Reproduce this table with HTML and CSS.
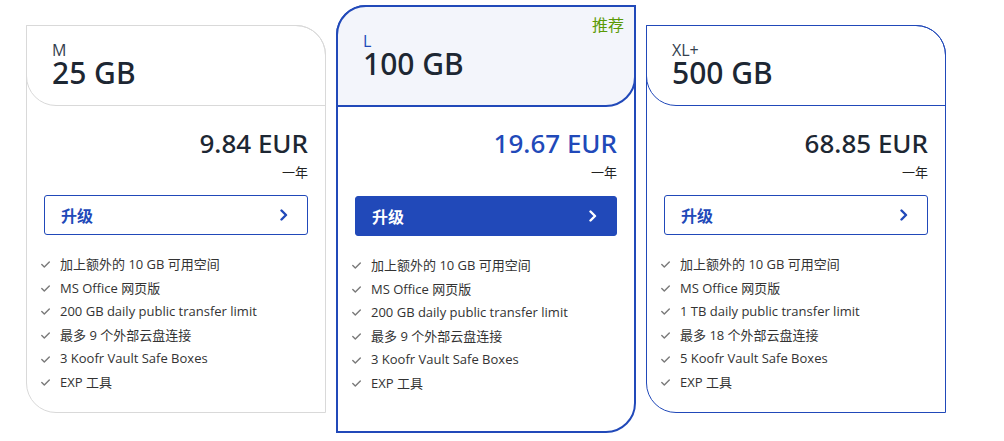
FILE: index.html
```html
<!DOCTYPE html>
<html lang="zh">
<head>
<meta charset="utf-8">
<title>Plans</title>
<link rel="stylesheet" href="styles.css">
</head>
<body>
<div class="plans">
  <div class="card">
    <div class="head">
      <div class="tier">M</div>
      <div class="size">25 GB</div>
    </div>
    <div class="body">
      <div class="price">9.84 EUR</div>
      <div class="period">一年</div>
      <button class="btn"><span>升级</span><svg class="chev" width="10" height="12" viewBox="0 0 10 12"><polyline points="2.5,1.5 7,6 2.5,10.5"/></svg></button>
      <ul class="features">
        <li><svg class="check" width="9" height="7" viewBox="0 0 9 7"><polyline points="0.8,3.6 3.3,6 8.3,1"/></svg><span>加上额外的 10 GB 可用空间</span></li>
        <li><svg class="check" width="9" height="7" viewBox="0 0 9 7"><polyline points="0.8,3.6 3.3,6 8.3,1"/></svg><span>MS Office 网页版</span></li>
        <li><svg class="check" width="9" height="7" viewBox="0 0 9 7"><polyline points="0.8,3.6 3.3,6 8.3,1"/></svg><span>200 GB daily public transfer limit</span></li>
        <li><svg class="check" width="9" height="7" viewBox="0 0 9 7"><polyline points="0.8,3.6 3.3,6 8.3,1"/></svg><span>最多 9 个外部云盘连接</span></li>
        <li><svg class="check" width="9" height="7" viewBox="0 0 9 7"><polyline points="0.8,3.6 3.3,6 8.3,1"/></svg><span>3 Koofr Vault Safe Boxes</span></li>
        <li><svg class="check" width="9" height="7" viewBox="0 0 9 7"><polyline points="0.8,3.6 3.3,6 8.3,1"/></svg><span>EXP 工具</span></li>
      </ul>
    </div>
  </div>

  <div class="card featured">
    <div class="head">
      <span class="badge">推荐</span>
      <div class="tier">L</div>
      <div class="size">100 GB</div>
    </div>
    <div class="body">
      <div class="price">19.67 EUR</div>
      <div class="period">一年</div>
      <button class="btn"><span>升级</span><svg class="chev" width="10" height="12" viewBox="0 0 10 12"><polyline points="2.5,1.5 7,6 2.5,10.5"/></svg></button>
      <ul class="features">
        <li><svg class="check" width="9" height="7" viewBox="0 0 9 7"><polyline points="0.8,3.6 3.3,6 8.3,1"/></svg><span>加上额外的 10 GB 可用空间</span></li>
        <li><svg class="check" width="9" height="7" viewBox="0 0 9 7"><polyline points="0.8,3.6 3.3,6 8.3,1"/></svg><span>MS Office 网页版</span></li>
        <li><svg class="check" width="9" height="7" viewBox="0 0 9 7"><polyline points="0.8,3.6 3.3,6 8.3,1"/></svg><span>200 GB daily public transfer limit</span></li>
        <li><svg class="check" width="9" height="7" viewBox="0 0 9 7"><polyline points="0.8,3.6 3.3,6 8.3,1"/></svg><span>最多 9 个外部云盘连接</span></li>
        <li><svg class="check" width="9" height="7" viewBox="0 0 9 7"><polyline points="0.8,3.6 3.3,6 8.3,1"/></svg><span>3 Koofr Vault Safe Boxes</span></li>
        <li><svg class="check" width="9" height="7" viewBox="0 0 9 7"><polyline points="0.8,3.6 3.3,6 8.3,1"/></svg><span>EXP 工具</span></li>
      </ul>
    </div>
  </div>

  <div class="card blue">
    <div class="head">
      <div class="tier">XL+</div>
      <div class="size">500 GB</div>
    </div>
    <div class="body">
      <div class="price">68.85 EUR</div>
      <div class="period">一年</div>
      <button class="btn"><span>升级</span><svg class="chev" width="10" height="12" viewBox="0 0 10 12"><polyline points="2.5,1.5 7,6 2.5,10.5"/></svg></button>
      <ul class="features">
        <li><svg class="check" width="9" height="7" viewBox="0 0 9 7"><polyline points="0.8,3.6 3.3,6 8.3,1"/></svg><span>加上额外的 10 GB 可用空间</span></li>
        <li><svg class="check" width="9" height="7" viewBox="0 0 9 7"><polyline points="0.8,3.6 3.3,6 8.3,1"/></svg><span>MS Office 网页版</span></li>
        <li><svg class="check" width="9" height="7" viewBox="0 0 9 7"><polyline points="0.8,3.6 3.3,6 8.3,1"/></svg><span>1 TB daily public transfer limit</span></li>
        <li><svg class="check" width="9" height="7" viewBox="0 0 9 7"><polyline points="0.8,3.6 3.3,6 8.3,1"/></svg><span>最多 18 个外部云盘连接</span></li>
        <li><svg class="check" width="9" height="7" viewBox="0 0 9 7"><polyline points="0.8,3.6 3.3,6 8.3,1"/></svg><span>5 Koofr Vault Safe Boxes</span></li>
        <li><svg class="check" width="9" height="7" viewBox="0 0 9 7"><polyline points="0.8,3.6 3.3,6 8.3,1"/></svg><span>EXP 工具</span></li>
      </ul>
    </div>
  </div>
</div>
</body>
</html>
```

FILE: styles.css
```css
* { box-sizing: border-box; }

body {
  margin: 0;
  background: #ffffff;
  color: #222222;
  font-family: "Open Sans", "Noto Sans CJK SC", sans-serif;
}

.plans {
  display: flex;
  align-items: stretch;
  gap: 10px;
  padding: 5px 0 0 26px;
}

.card {
  width: 300px;
  margin: 20px 0;
  display: flex;
  flex-direction: column;
  position: relative;
  background: #ffffff;
  border: 1px solid #d9d9d9;
  border-radius: 0 30px 0 30px;
}

.head {
  margin: -1px -1px 0;
  border: 1px solid #d9d9d9;
  border-radius: 0 30px 0 30px;
  padding: 16px 25px 17px;
}

.card.blue,
.card.blue .head {
  border-color: #2149b9;
}

.card.featured {
  margin: 0;
  border: 2px solid #2149b9;
  border-radius: 30px 0 30px 0;
}

.card.featured .head {
  margin: -2px -2px 0;
  border: 2px solid #2149b9;
  border-radius: 30px 0 30px 0;
  background: #f3f5fb;
  padding: 26px 25px 26px;
}

.badge {
  position: absolute;
  top: 10px;
  right: 10px;
  font-size: 16px;
  line-height: 16px;
  color: #5b9a06;
}

.tier {
  font-size: 16px;
  line-height: 16px;
  color: #34414e;
}

.featured .tier {
  color: #2149b9;
}

.size {
  font-family: "Noto Sans", "Open Sans", sans-serif;
  font-size: 30px;
  line-height: 30px;
  font-weight: 500;
  color: #1d2733;
}

.body {
  flex: 1;
  padding: 21px 17px 17px 17px;
}

.featured .body {
  padding: 20px 17px 35px 17px;
}

.price {
  font-family: "Noto Sans", "Open Sans", sans-serif;
  text-align: right;
  font-size: 26px;
  line-height: 32px;
  font-weight: 500;
  color: #1d2733;
}

.featured .price {
  color: #2149b9;
}

.period {
  text-align: right;
  font-size: 13px;
  line-height: 18px;
  margin-top: 4px;
  color: #222222;
}

.btn {
  display: flex;
  justify-content: space-between;
  align-items: center;
  width: 100%;
  height: 40px;
  margin-top: 14px;
  padding: 0 18px 0 16px;
  border: 1px solid #2149b9;
  border-radius: 3px;
  background: #ffffff;
  color: #2149b9;
  font-family: inherit;
  font-size: 16px;
  font-weight: 700;
}

.featured .btn {
  margin-top: 15px;
  background: #2149b9;
  color: #ffffff;
}

.chev polyline {
  fill: none;
  stroke: currentColor;
  stroke-width: 2.4;
  stroke-linecap: round;
  stroke-linejoin: round;
}

.features {
  list-style: none;
  margin: 18px 0 0 -3px;
  padding: 0;
}

.features li {
  display: flex;
  align-items: center;
  gap: 10px;
  font-size: 13px;
  line-height: 23.6px;
  color: #333333;
}

.check polyline {
  fill: none;
  stroke: #7a7a7a;
  stroke-width: 1.4;
  stroke-linecap: round;
  stroke-linejoin: round;
}
```
